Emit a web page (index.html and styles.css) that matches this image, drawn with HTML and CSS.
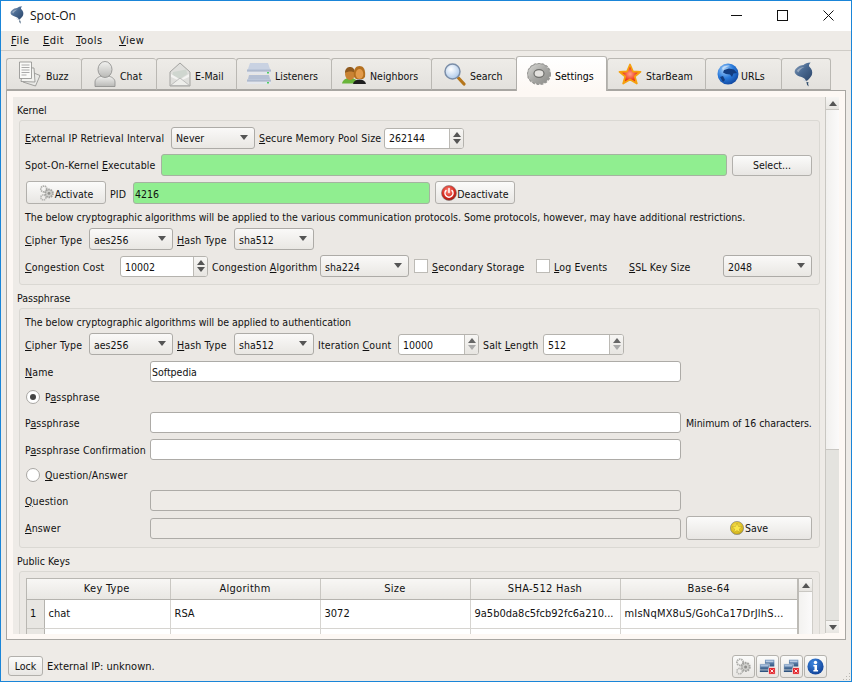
FILE: index.html
```html
<!DOCTYPE html>
<html lang="en">
<head>
<meta charset="utf-8">
<title>Spot-On</title>
<link rel="stylesheet" href="styles.css">
</head>
<body>
<svg class="defs" aria-hidden="true">
  <defs>
    <linearGradient id="gDol" x1="0" y1="0" x2="1" y2="1"><stop offset="0" stop-color="#8ea3bd"/><stop offset=".45" stop-color="#4a6a92"/><stop offset="1" stop-color="#2a4468"/></linearGradient>
    <linearGradient id="gGrey" x1="0" y1="0" x2="0" y2="1"><stop offset="0" stop-color="#f2f2f0"/><stop offset="1" stop-color="#b9b9b6"/></linearGradient>
    <linearGradient id="gTorus" x1="0" y1="0" x2="1" y2="1"><stop offset="0" stop-color="#d8d8d5"/><stop offset=".5" stop-color="#a9a9a6"/><stop offset="1" stop-color="#8b8b88"/></linearGradient>
    <linearGradient id="gDrive" x1="0" y1="0" x2="0" y2="1"><stop offset="0" stop-color="#c3cee0"/><stop offset="1" stop-color="#7d8aa3"/></linearGradient>
    <radialGradient id="gGlobe" cx=".35" cy=".3" r=".8"><stop offset="0" stop-color="#a9d2fa"/><stop offset=".5" stop-color="#2a7bdc"/><stop offset="1" stop-color="#0d3f96"/></radialGradient>
    <radialGradient id="gLens" cx=".4" cy=".35" r=".7"><stop offset="0" stop-color="#ffffff"/><stop offset="1" stop-color="#a9c6e8"/></radialGradient>
    <radialGradient id="gStar" cx=".5" cy=".5" r=".55"><stop offset="0" stop-color="#ffa08c"/><stop offset=".6" stop-color="#ee3a1c"/><stop offset="1" stop-color="#e0380f"/></radialGradient>
    <radialGradient id="gRed" cx=".45" cy=".35" r=".7"><stop offset="0" stop-color="#ff8d80"/><stop offset=".6" stop-color="#d92b20"/><stop offset="1" stop-color="#8f1510"/></radialGradient>
    <radialGradient id="gGold" cx=".45" cy=".4" r=".7"><stop offset="0" stop-color="#ffe95c"/><stop offset=".7" stop-color="#d8b81c"/><stop offset="1" stop-color="#8f7d2a"/></radialGradient>
    <radialGradient id="gInfo" cx=".4" cy=".3" r=".8"><stop offset="0" stop-color="#3f88e0"/><stop offset="1" stop-color="#0a3a90"/></radialGradient>
    <linearGradient id="gMon" x1="0" y1="0" x2="0" y2="1"><stop offset="0" stop-color="#7fa0c8"/><stop offset="1" stop-color="#2f5480"/></linearGradient>

    <symbol id="i-dolphin" viewBox="0 0 20 26">
      <path fill="url(#gDol)" d="M2 7C4.500 4 8 3 10 3 11.500 1.500 14 .4 17.500 .3 15.800 2 15.500 3.500 16 4.500 19 7 19.800 10.500 18.800 13.500 17.800 16 15.500 17.500 14.500 19L12.500 19.800C12 18 11 17 8.500 16 5 15 1.500 13.500 .8 11 .5 9.500 1 8 2 7Z"/>
      <path fill="#cfd8e3" d="M8.500 17C10 17.500 11.500 18.500 12 20.500L10.500 20C10 18.800 9.500 18 8.500 17Z"/>
      <path fill="#33506f" d="M13 20.500 15.500 21.500 14.800 22.500 15.500 25.500 13.800 24 13.300 22Z"/>
      <path fill="#fff" opacity=".35" d="M3 9C4.500 6.500 8 5 11 5 8 6.500 6 8 4.500 11Z"/>
    </symbol>
    <symbol id="i-buzz" viewBox="0 0 24 26">
      <path fill="#e9e9e6" stroke="#8d8d8a" stroke-width=".8" d="M11 10 22 14.500 17.500 25 5 21Z"/>
      <path fill="#f2f2ef" stroke="#8d8d8a" stroke-width=".8" d="M5 6.500 16 7 17 21 3 20.500Z"/>
      <path fill="#fafaf8" stroke="#8d8d8a" stroke-width=".8" d="M1.500 1H13.500V17.500H1.500Z"/>
      <path stroke="#aaa" stroke-width="1" d="M3.500 4h8M3.500 6.500h8M3.500 9h8M3.500 11.500h8M3.500 14h5"/>
    </symbol>
    <symbol id="i-chat" viewBox="0 0 22 26">
      <path fill="url(#gGrey)" stroke="#8c8c8a" stroke-width=".8" d="M1 25.500V21C1 17.500 5 15.500 8 15H14C17 15.500 21 17.500 21 21V25.500Z"/>
      <ellipse cx="11" cy="8.500" rx="7" ry="8" fill="url(#gGrey)" stroke="#8c8c8a" stroke-width=".8"/>
    </symbol>
    <symbol id="i-mail" viewBox="0 0 22 25">
      <path fill="#dfdfdc" stroke="#a3a3a0" d="M1 10 11 1 21 10V24H1Z"/>
      <path fill="#cfd6cf" d="M4 10 17 7.500 18.500 12 11 17 3.500 13Z"/>
      <path fill="#f4f4f2" d="M2 12 11 17.500 20 12 20 15 11 19 2 15Z"/>
      <path fill="#eeeeeb" stroke="#aaa" stroke-width=".7" d="M1.500 23.500 11 16 20.500 23.500Z"/>
    </symbol>
    <symbol id="i-drive" viewBox="0 0 24 22">
      <path fill="#c9d2e2" d="M3 0H21L23 6H1Z"/>
      <rect x="0" y="6" width="24" height="5" rx="1" fill="url(#gDrive)"/>
      <rect x="0" y="8.500" width="24" height="2.500" fill="#e3e6ec"/>
      <path fill="#b5c0d4" d="M2 12H22L23 16H1Z"/>
      <rect x="0" y="16" width="24" height="5" rx="1" fill="url(#gDrive)"/>
      <rect x="0" y="18.500" width="24" height="2.500" fill="#e3e6ec"/>
      <rect x="20" y="9" width="2" height="1.500" fill="#4fcf62"/>
      <rect x="20" y="19" width="2" height="1.500" fill="#4fcf62"/>
    </symbol>
    <symbol id="i-people" viewBox="0 0 24 19">
      <path fill="#69b53a" d="M0 17.500C1 13.500 4 12 8 12S15 13.500 16 17.500Z"/>
      <ellipse cx="8" cy="8" rx="5" ry="6" fill="#c98334"/>
      <path fill="#8f5a1f" d="M3 7C3 2 6 1 8 1S13 2 13 7C11 5 6 5 3 7Z"/>
      <path fill="#1e1e1e" d="M11 18C11.500 15 14 13.500 17.500 13.500S23.500 15 24 18Z"/>
      <path fill="#b4701f" d="M12 11C11 3 14 0 17.500 0S24 3 23 11L21 13H14Z"/>
      <ellipse cx="17.500" cy="8" rx="3.800" ry="5" fill="#e29a4a"/>
    </symbol>
    <symbol id="i-search" viewBox="0 0 22 23">
      <path stroke="#b5761c" stroke-width="3.200" stroke-linecap="round" d="M14.500 15 20 21"/>
      <circle cx="8.500" cy="8.500" r="7.500" fill="url(#gLens)" stroke="#7b8ea8" stroke-width="1.500"/>
    </symbol>
    <symbol id="i-settings" viewBox="0 0 24 22">
      <ellipse cx="12" cy="11" rx="10.500" ry="9.500" fill="none" stroke="#8f8f8c" stroke-width="2.400" stroke-dasharray="2.400 1.600"/>
      <ellipse cx="12" cy="11" rx="11" ry="10" fill="url(#gTorus)"/>
      <ellipse cx="12" cy="11" rx="11.500" ry="10.500" fill="none" stroke="#9a9a97" stroke-width="1.200" stroke-dasharray="2.400 1.800"/>
      <ellipse cx="12" cy="10.500" rx="5" ry="3.800" fill="#e4e2df" stroke="#6f6f6c" stroke-width="1.200"/>
    </symbol>
    <symbol id="i-star" viewBox="0 0 24 22">
      <path fill="url(#gStar)" stroke="#f5a10f" stroke-width="1.800" stroke-linejoin="round" d="M12 1.500 15 8.500 22.500 8.800 16.800 13.500 18.800 20.500 12 16.500 5.200 20.500 7.200 13.500 1.500 8.800 9 8.500Z"/>
    </symbol>
    <symbol id="i-globe" viewBox="0 0 22 22">
      <circle cx="11" cy="11" r="10.500" fill="url(#gGlobe)"/>
      <path fill="#123c80" d="M7 7 12 5.500 17 6.500 20 10 16.500 10.500 15 14 13 11.500 9 11 6 9.500ZM3 14 6 13 8 17 6 19Z"/>
      <path fill="#dbe9fa" opacity=".7" d="M5 5C7 2.500 11 2 13 3 10 3.500 7 5 6 7.500Z"/>
    </symbol>
    <symbol id="i-gears" viewBox="0 0 20 20">
      <circle cx="6" cy="5" r="3.700" fill="none" stroke="#aeaeab" stroke-width="2.200" stroke-dasharray="1.800 .8"/>
      <circle cx="12.500" cy="10.500" r="4.800" fill="#d0d0cd" stroke="#a2a29f" stroke-width="2.400" stroke-dasharray="2 1"/>
      <circle cx="12.500" cy="10.500" r="1.800" fill="#8f8f8c"/>
      <circle cx="5.500" cy="15.500" r="3.200" fill="none" stroke="#b5b5b2" stroke-width="2" stroke-dasharray="1.800 .8"/>
    </symbol>
    <symbol id="i-power" viewBox="0 0 16 16">
      <circle cx="8" cy="8" r="7.500" fill="url(#gRed)" stroke="#7d7d7a" stroke-width=".6"/>
      <path fill="none" stroke="#fff" stroke-width="1.500" stroke-linecap="round" d="M5 5.500A4 4 0 1 0 11 5.500M8 3.500V7.500"/>
    </symbol>
    <symbol id="i-save" viewBox="0 0 14 14">
      <circle cx="7" cy="7" r="6.600" fill="url(#gGold)" stroke="#878780" stroke-width=".7"/>
      <path fill="#fbe74a" stroke="#a8901c" stroke-width=".4" d="M7 2 8.500 5.500 12 5.800 9.300 8 10.200 11.500 7 9.600 3.800 11.500 4.700 8 2 5.800 5.500 5.500Z"/>
    </symbol>
    <symbol id="i-net" viewBox="0 0 20 20">
      <rect x="7" y="2" width="11" height="8" fill="url(#gMon)"/>
      <rect x="8" y="3" width="9" height="2" fill="#b9cbe2"/>
      <rect x="1" y="7" width="11" height="7" fill="url(#gMon)" stroke="#e9e8e5" stroke-width=".6"/>
      <rect x="2" y="8" width="9" height="2" fill="#a8bfdc"/>
      <rect x="1" y="14.500" width="10" height="2" fill="#2f5480"/>
      <rect x="11.500" y="11.500" width="7.500" height="7.500" fill="#e3242b" stroke="#f5f5f3" stroke-width=".6"/>
      <path stroke="#fff" stroke-width="1.100" d="M13.500 13.500 17 17M17 13.500 13.500 17"/>
    </symbol>
    <symbol id="i-info" viewBox="0 0 20 20">
      <circle cx="10" cy="10" r="9.500" fill="url(#gInfo)"/>
      <circle cx="10" cy="5.300" r="2" fill="#fff"/>
      <path fill="#fff" d="M7.500 8.300H11.800V14H13V15.800H7.500V14H8.800V10H7.500Z"/>
    </symbol>
  </defs>
</svg>

<div class="window">
  <header class="titlebar">
    <svg class="title-icon"><use href="#i-dolphin"/></svg>
    <span class="title-text">Spot-On</span>
    <div class="win-controls">
      <div class="win-btn"><svg width="11" height="11"><path d="M0 5.500H11" stroke="#111"/></svg></div>
      <div class="win-btn"><svg width="11" height="11"><rect x=".5" y=".5" width="10" height="10" fill="none" stroke="#111"/></svg></div>
      <div class="win-btn"><svg width="11" height="11"><path d="M.5 .5 10.500 10.500M10.500 .5 .5 10.500" stroke="#111"/></svg></div>
    </div>
  </header>

  <nav class="menubar">
    <span><u>F</u>ile</span><span><u>E</u>dit</span><span><u>T</u>ools</span><span><u>V</u>iew</span>
  </nav>

  <div class="tabbar">
    <div class="tab t-buzz"><svg class="ic-buzz"><use href="#i-buzz"/></svg>Buzz</div>
    <div class="tab t-chat"><svg class="ic-chat"><use href="#i-chat"/></svg>Chat</div>
    <div class="tab t-mail"><svg class="ic-mail"><use href="#i-mail"/></svg>E-Mail</div>
    <div class="tab t-list"><svg class="ic-drive"><use href="#i-drive"/></svg>Listeners</div>
    <div class="tab t-neigh"><svg class="ic-people"><use href="#i-people"/></svg>Neighbors</div>
    <div class="tab t-search"><svg class="ic-search"><use href="#i-search"/></svg>Search</div>
    <div class="tab tab-active t-set"><svg class="ic-settings"><use href="#i-settings"/></svg>Settings</div>
    <div class="tab t-star"><svg class="ic-star"><use href="#i-star"/></svg>StarBeam</div>
    <div class="tab t-urls"><svg class="ic-globe"><use href="#i-globe"/></svg>URLs</div>
    <div class="tab t-dol"><svg class="ic-dol"><use href="#i-dolphin"/></svg></div>
  </div>

  <main class="pane">
    <div class="scroll-content">
      <div class="group-title">Kernel</div>
      <section class="group g-kernel">
        <div class="row r-k1">
          <label><u>E</u>xternal IP Retrieval Interval</label>
          <div class="combo">Never</div>
          <label><u>S</u>ecure Memory Pool Size</label>
          <div class="spin"><span class="spin-val">262144</span><span class="spin-btns"><i class="up"></i><i class="down"></i></span></div>
        </div>
        <div class="row r-k2">
          <label>Spot-On-Kernel <u>E</u>xecutable</label>
          <div class="input green"></div>
          <div class="btn">Select...</div>
        </div>
        <div class="row r-k3 r-low">
          <div class="btn"><svg class="btn-ic-gears"><use href="#i-gears"/></svg>Activate</div>
          <label>PID</label>
          <div class="input green">4216</div>
          <div class="btn btn-deact"><svg class="btn-ic-power"><use href="#i-power"/></svg>Deactivate</div>
        </div>
        <p class="note">The below cryptographic algorithms will be applied to the various communication protocols. Some protocols, however, may have additional restrictions.</p>
        <div class="row r-k5 r-low">
          <label><u>C</u>ipher Type</label>
          <div class="combo">aes256</div>
          <label><u>H</u>ash Type</label>
          <div class="combo">sha512</div>
        </div>
        <div class="row r-k6 r-low">
          <label><u>C</u>ongestion Cost</label>
          <div class="spin"><span class="spin-val">10002</span><span class="spin-btns"><i class="up"></i><i class="down"></i></span></div>
          <label>Congestion <u>A</u>lgorithm</label>
          <div class="combo">sha224</div>
          <div class="check-cell"><span class="check"></span></div>
          <label><u>S</u>econdary Storage</label>
          <div class="check-cell"><span class="check"></span></div>
          <label><u>L</u>og Events</label>
          <label><u>S</u>SL Key Size</label>
          <div class="combo">2048</div>
        </div>
      </section>

      <div class="group-title">Passphrase</div>
      <section class="group g-pass">
        <p class="note note-auth">The below cryptographic algorithms will be applied to authentication</p>
        <div class="row r-p1 r-low">
          <label><u>C</u>ipher Type</label>
          <div class="combo">aes256</div>
          <label><u>H</u>ash Type</label>
          <div class="combo">sha512</div>
          <label>Iteration <u>C</u>ount</label>
          <div class="spin"><span class="spin-val">10000</span><span class="spin-btns"><i class="up dim"></i><i class="down dim"></i></span></div>
          <label>Salt <u>L</u>ength</label>
          <div class="spin"><span class="spin-val">512</span><span class="spin-btns"><i class="up dim"></i><i class="down dim"></i></span></div>
        </div>
        <div class="row r-form r-name">
          <label><u>N</u>ame</label>
          <div class="input">Softpedia</div>
        </div>
        <div class="row r-radio">
          <span class="radio radio-on"></span><label>P<u>a</u>ssphrase</label>
        </div>
        <div class="row r-form r-pw">
          <label>P<u>a</u>ssphrase</label>
          <div class="input"></div>
          <label class="hint">Minimum of 16 characters.</label>
        </div>
        <div class="row r-form r-conf">
          <label>P<u>a</u>ssphrase Confirmation</label>
          <div class="input"></div>
        </div>
        <div class="row r-radio">
          <span class="radio"></span><label><u>Q</u>uestion/Answer</label>
        </div>
        <div class="row r-form r-q">
          <label><u>Q</u>uestion</label>
          <div class="input disabled"></div>
        </div>
        <div class="row r-form r-a">
          <label><u>A</u>nswer</label>
          <div class="input disabled"></div>
          <div class="btn btn-save"><svg class="btn-ic-save"><use href="#i-save"/></svg>Save</div>
        </div>
      </section>

      <div class="group-title">Public Keys</div>
      <section class="group g-keys">
        <div class="table-wrap">
          <table class="keys">
            <thead>
              <tr><th class="corner"></th><th class="c-type">Key Type</th><th class="c-alg">Algorithm</th><th class="c-size">Size</th><th class="c-sha">SHA-512 Hash</th><th class="c-b64">Base-64</th></tr>
            </thead>
            <tbody>
              <tr><th class="rownum">1</th><td>chat</td><td>RSA</td><td>3072</td><td>9a5b0da8c5fcb92fc6a210...</td><td class="td-b64">mIsNqMX8uS/GohCa17DrJlhS...</td></tr>
              <tr><th class="rownum"></th><td></td><td></td><td></td><td></td><td></td></tr>
            </tbody>
          </table>
          <div class="mini-scroll"><span class="sb-btn"><i class="up"></i></span></div>
        </div>
      </section>
    </div>
    <aside class="vscroll">
      <div class="sb-btn"><i class="up"></i></div>
      <div class="sb-handle"></div>
      <div class="sb-track"></div>
      <div class="sb-btn sb-btn-down"><i class="down"></i></div>
    </aside>
  </main>

  <footer class="statusbar">
    <div class="btn btn-lock">Lock</div>
    <span class="status-text">External IP: unknown.</span>
    <div class="status-icons">
      <div class="status-btn"><svg><use href="#i-gears"/></svg></div>
      <div class="status-btn"><svg><use href="#i-net"/></svg></div>
      <div class="status-btn"><svg><use href="#i-net"/></svg></div>
      <div class="status-btn"><svg><use href="#i-info"/></svg></div>
    </div>
    <span class="grip"></span>
  </footer>
</div>
</body>
</html>
```
FILE: styles.css
```css
* { box-sizing: border-box; }
html, body { margin: 0; padding: 0; }
body {
  width: 852px; height: 682px; overflow: hidden;
  font: 10.5px/14px "DejaVu Sans Condensed", "DejaVu Sans", sans-serif;
  color: #111;
  background: #eeebe7;
}
.defs { position: absolute; width: 0; height: 0; }
u { text-underline-offset: 1px; }
label { white-space: nowrap; letter-spacing: .15px; }
.hint { letter-spacing: -.05px; }
.window {
  width: 852px; height: 682px;
  border: 1px solid #1a85d8;
  display: flex; flex-direction: column;
  background: #eeebe7;
}

/* title bar */
.titlebar { height: 30px; padding-bottom: 2px; background: #fff; display: flex; align-items: center; flex: none; }
.title-icon { width: 14px; height: 18px; margin-left: 9px; margin-top: 0; }
.title-text { font: 12px "Open Sans", sans-serif; margin-left: 6px; color: #111; }
.win-controls { margin-left: auto; display: flex; }
.win-btn { width: 46px; height: 28px; display: flex; align-items: center; justify-content: center; }
.win-btn svg { display: block; }

/* menu */
.menubar {
  height: 20px; flex: none; padding-top: 1px;
  border-bottom: 1px solid #cfccc7;
  display: grid; grid-template-columns: 32px 33px 43px 40px;
  padding-left: 10px; align-items: center;
  font-size: 11px; letter-spacing: .5px;
}

/* tabs */
.tabbar {
  height: 39px; flex: none;
  padding-left: 5px;
  display: grid;
  grid-template-columns: 75px 75px 80px 95px 100px 85px 91px 98px 76px 50px;
  align-items: end;
  position: relative; z-index: 1;
}
.tab {
  height: 32px; margin-bottom: 0; padding-top: 4px;
  border: 1px solid #bab8b3; border-bottom: 1px solid #a8a6a2;
  border-right: 0;
  border-radius: 3px 3px 0 0;
  background: linear-gradient(#eeece8, #e3e1dd);
  display: flex; align-items: center; white-space: nowrap;
  color: #111;
}
.t-dol { border-right: 1px solid #bab8b3; }
.tab-active {
  height: 35px; background: linear-gradient(#fff, #fdf8f4);
  border-bottom: 0; margin-bottom: -1px;
  border-left: 1px solid #b0aeaa; border-right: 1px solid #b0aeaa;
  color: #000;
}
.tab svg { flex: none; display: block; }
.ic-buzz { width: 24px; height: 26px; margin: -4px 4px 0 11px; }
.ic-chat { width: 22px; height: 26px; margin: -4px 4px 0 12px; }
.ic-mail { width: 22px; height: 25px; margin: -4px 4px 0 12px; }
.ic-drive { width: 24px; height: 22px; margin: -4px 4px 0 10px; }
.ic-people { width: 24px; height: 19px; margin: -1px 4px 0 10px; }
.ic-search { width: 22px; height: 23px; margin: -4px 4px 0 12px; }
.ic-settings { width: 24px; height: 22px; margin: -4px 4px 0 10px; }
.ic-star { width: 24px; height: 22px; margin: -4px 4px 0 10px; }
.ic-globe { width: 22px; height: 22px; margin: -5px 2px 0 11px; }
.ic-dol { width: 19px; height: 25px; margin: -4px 0 0 12px; }

/* pane */
.pane {
  height: 550px; flex: none;
  margin: 0 5px;
  border: 1px solid #a8a6a2;
  background: #fdf8f4;
  padding: 6px;
  display: flex;
}
.scroll-content { width: 812px; height: 537px; background: #eeebe7; overflow: hidden; padding: 3px 5px 0 6px; flex: none; }
.group-title { height: 20px; margin-left: -2px; display: flex; align-items: center; }
.group { border: 1px solid #dad8d3; border-radius: 3px; background: #ebe8e4; padding: 6px 7px 7px 5px; margin-bottom: 3px; }

.row { display: grid; align-items: center; height: 22px; column-gap: 4px; }
.row > * { min-width: 0; }
.r-low > label, .r-low > .combo, .r-low > .btn, .r-low > .input { padding-top: 2px; }
.r-low .spin-val { padding-top: 2px; }
.r-low .btn svg { margin-top: -2px; }
.r-k1 { grid-template-columns: 142px 84px 121px 80px; }
.r-k2 { grid-template-columns: 131px 566px 80px; column-gap: 5px; margin-top: 5px; }
.r-k3 { grid-template-columns: 80px 19px 297px 80px; margin: 5px 0 0 1px; height: 23px; }
.btn-deact { margin-left: 1px; margin-right: -1px; }
.note { margin: 5px 0 3px; height: 16px; line-height: 16px; white-space: nowrap; }
.r-k5 { grid-template-columns: 60px 84px 53px 80px; }
.r-k6 { grid-template-columns: 91px 88px 104px 89px 15px 100px 14px 71px 90px 89px; margin-top: 5px; }
.check-cell { display: flex; justify-content: flex-end; }
.check { width: 14px; height: 14px; background: #fff; border: 1px solid #bdbbb6; display: block; }

.note-auth { margin: 0 0 4px; height: 14px; line-height: 14px; }
.r-p1 { grid-template-columns: 60px 84px 53px 80px 76px 81px 56px 81px; }
.r-form { grid-template-columns: 120px 531px auto; column-gap: 5px; height: 21px; }
.r-name { margin-top: 6px; }
.r-radio { display: flex; height: 22px; margin-top: 4px; padding-left: 1px; gap: 5px; }
.r-pw { margin-top: 4px; }
.r-conf { margin-top: 6px; }
.r-q { margin-top: 4px; }
.r-a { margin-top: 5px; height: 24px; }
.r-a .input { height: 21px; }

/* controls */
.combo {
  height: 22px; padding: 0 4px;
  border: 1px solid #adaba7; border-radius: 3px;
  background: linear-gradient(#faf9f8, #e9e7e3);
  display: flex; align-items: center; position: relative;
}
.combo::after {
  content: ""; position: absolute; right: 6px; top: 7px;
  border-left: 4px solid transparent; border-right: 4px solid transparent; border-top: 5px solid #555;
}
.input {
  height: 22px; border: 1px solid #adaba7; border-radius: 3px;
  background: #fff; padding: 0 1px 0 1px;
  display: flex; align-items: center;
}
.r-form .input { height: 21px; }
.green { background: #90ee90; border-color: #a5b3a0; }
.disabled { background: #eeebe7; }
.spin {
  height: 21px; border: 1px solid #b5b3ae; border-radius: 3px; background: #fff;
  display: flex; align-items: stretch;
}
.spin-val { flex: 1; padding-left: 4px; display: flex; align-items: center; }
.spin-btns { width: 14px; flex: none; border-left: 1px solid #bcbab5; background: linear-gradient(#f7f6f4, #e7e5e1); display: flex; flex-direction: column; align-items: center; justify-content: center; gap: 2px; border-radius: 0 2px 2px 0; }
.up, .down { display: block; width: 0; height: 0; border-left: 4px solid transparent; border-right: 4px solid transparent; }
.up { border-bottom: 5px solid #555; }
.down { border-top: 5px solid #555; }
.up.dim { border-bottom-color: #666; }
.down.dim { border-top-color: #aaa; }
.btn {
  height: 21px; border: 1px solid #b2b0ac; border-radius: 3px;
  background: linear-gradient(#fbfbfa, #e8e6e3);
  display: flex; align-items: center; justify-content: center; white-space: nowrap;
}
.r-k3 .btn { height: 23px; }
.btn-ic-gears { width: 16px; height: 16px; margin-right: 0; }
.btn-ic-power { width: 16px; height: 16px; margin-right: 0; }
.btn-ic-save { width: 14px; height: 14px; margin-right: 1px; }
.btn-save { height: 24px; grid-column: 3; width: 126px; }
.radio {
  width: 14px; height: 14px; border-radius: 50%; background: #fff; border: 1px solid #a9a7a3;
  flex: none; display: flex; align-items: center; justify-content: center;
}
.radio-on::after { content: ""; width: 6px; height: 6px; border-radius: 50%; background: #444; }

/* table */
.g-keys { padding-top: 6px; height: 120px; }
.table-wrap { display: flex; width: 786px; margin-left: 1px; border-top: 1px solid #b9b7b2; border-left: 1px solid #b9b7b2; }
.keys { border-collapse: collapse; table-layout: fixed; width: 771px; background: #fff; flex: none; border-right: 2px solid #bdbbb6; font-size: 11px; }
.keys thead th {
  height: 20px; padding: 0; font-weight: normal; text-align: center; letter-spacing: .3px;
  background: linear-gradient(#f8f7f5, #e9e7e3);
  border-right: 1px solid #c9c7c2; border-bottom: 1px solid #b5b3ae;
}
.keys .corner { width: 17px; border-right: 0; }
.c-type { width: 126px; }
.c-alg { width: 150px; }
.c-size { width: 150px; }
.c-sha { width: 150px; }
.c-b64 { width: 178px; }
.keys td { height: 29px; padding: 0 0 0 4px; border-right: 1px solid #d6d4d0; border-bottom: 1px solid #d6d4d0; white-space: nowrap; overflow: hidden; }
.keys .td-b64 { letter-spacing: .2px; }
.rownum { font-weight: normal; text-align: left; padding: 0 0 0 3px; background: #e8e6e2; border-right: 1px solid #b5b3ae; border-bottom: 1px solid #c9c7c2; }
.mini-scroll { width: 14px; flex: none; background: linear-gradient(90deg, #f3f2f0, #fbfafa); border-right: 1px solid #cfcdc8; }
.sb-btn { display: flex; align-items: center; justify-content: center; height: 13px; background: linear-gradient(#f7f6f4, #e7e5e1); border-bottom: 1px solid #c9c7c2; flex: none; }

/* vertical scrollbar */
.vscroll { width: 14px; margin-left: 0; flex: none; display: flex; flex-direction: column; border-left: 1px solid #c9c7c2; background: #e4e3df; }
.sb-handle { height: 340px; background: linear-gradient(90deg, #f1f0ee, #fbfafa); border-bottom: 1px solid #c9c7c2; flex: none; }
.sb-track { flex: 1; background: #e4e3df; }
.sb-btn-down { border-bottom: 0; border-top: 1px solid #c9c7c2; }

/* status */
.statusbar { flex: 1; display: flex; position: relative; padding: 16px 0 0 7px; align-items: flex-start; }
.btn-lock { width: 35px; height: 20px; flex: none; }
.status-text { margin-left: 4px; padding-top: 1px; line-height: 20px; font-size: 11px; }
.status-icons { position: absolute; right: 24px; top: 15px; display: flex; gap: 1px; }
.status-btn { width: 23px; height: 23px; border: 1px solid #b5b3ae; border-radius: 3px; background: linear-gradient(#fbfbfa, #e8e6e3); display: flex; align-items: center; justify-content: center; }
.status-btn svg { width: 17px; height: 17px; display: block; }
.grip {
  position: absolute; right: 1px; bottom: 1px; width: 8px; height: 8px;
  background: radial-gradient(circle, #b8b6b1 .8px, transparent 1px) 0 0 / 3px 3px;
  clip-path: polygon(100% 0, 100% 100%, 0 100%);
}
```
